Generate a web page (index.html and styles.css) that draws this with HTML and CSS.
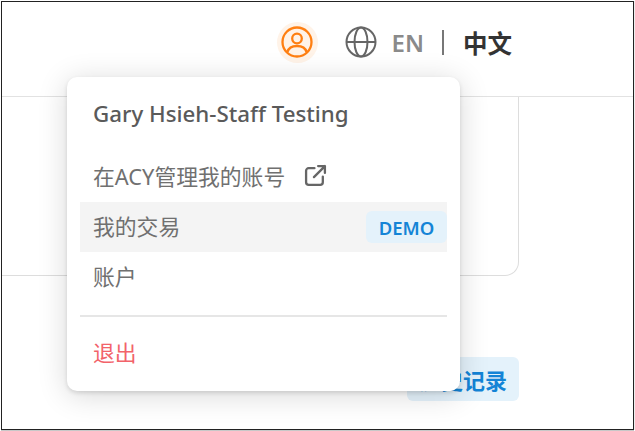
FILE: index.html
```html
<!DOCTYPE html>
<html lang="zh-CN">
<head>
    <meta charset="UTF-8" />
    <meta name="viewport" content="width=device-width, initial-scale=1" />
    <title>我的交易</title>
    <link rel="stylesheet" href="styles.css">
</head>
<body>
    <div class="frame">
        <header class="topbar">
            <span class="userIcon">
                <svg width="32" height="32" viewBox="0 0 32 32" fill="none" stroke="#ff7f11" stroke-width="2.300">
                    <circle cx="16" cy="16" r="14.500" />
                    <circle cx="16" cy="12.500" r="4.800" />
                    <path d="M6.500 26c1-4 4.500-6 9.500-6s8.500 2 9.500 6" />
                </svg>
            </span>
            <svg class="globe" width="32" height="32" viewBox="0 0 32 32" fill="none" stroke="#666" stroke-width="2">
                <circle cx="16" cy="16" r="14.500" />
                <ellipse cx="16" cy="16" rx="6.500" ry="14.500" />
                <path d="M1.500 16h29" />
            </svg>
            <span class="langEn">EN</span>
            <span class="langSep"></span>
            <span class="langZh">中文</span>
        </header>

        <div class="content">
            <div class="card"></div>
            <div class="recordRow">
                <a class="recordBtn">历史记录</a>
            </div>
        </div>

        <!-- user dropdown -->
        <div class="menu">
            <div class="menuName">Gary Hsieh-Staff Testing</div>
            <div class="menuItem">
                <span>在ACY管理我的账号</span>
                <svg class="extIcon" width="23" height="23" viewBox="0 0 22 22" fill="none" stroke="#666" stroke-width="2.200" stroke-linecap="round" stroke-linejoin="round">
                    <path d="M10 4H4.500A2.500 2.500 0 0 0 2 6.500v11A2.500 2.500 0 0 0 4.500 20h11a2.500 2.500 0 0 0 2.500-2.500V12" />
                    <path d="M9.500 12.500 20 2M13.500 2H20v6.500" />
                </svg>
            </div>
            <div class="menuItem active">
                <span>我的交易</span>
                <span class="demoTag">DEMO</span>
            </div>
            <div class="menuItem">账户</div>
            <div class="menuLine"></div>
            <div class="menuItem logout">退出</div>
        </div>
    </div>
</body>
</html>
```

FILE: styles.css
```css
* {
    box-sizing: border-box;
}
html, body {
    margin: 0;
    padding: 0;
    background: #fff;
}
body {
    width: 635px;
    height: 431px;
    padding: 1px 0 0 1px;
    overflow: hidden;
    font-family: "Noto Sans", "Noto Sans CJK SC", sans-serif;
}
.frame {
    position: relative;
    width: 633px;
    height: 429px;
    border: 1px solid #222;
    box-shadow: 0 1px 0 #c8c8c8, 1px 0 0 #eee;
    overflow: hidden;
    background: #fff;
}

/* top bar */
.topbar {
    height: 95px;
    border-bottom: 1px solid #e2e2e2;
    display: flex;
    align-items: center;
    justify-content: flex-end;
    padding: 0 121px 14px 0;
}
.userIcon {
    width: 41px;
    height: 41px;
    border-radius: 50%;
    background: #fff3e8;
    display: flex;
    align-items: center;
    justify-content: center;
    margin-right: 27px;
}
.globe {
    margin-right: 15px;
}
.langEn {
    font-size: 24px;
    font-weight: 600;
    color: #8a8a8a;
}
.langSep {
    width: 2px;
    height: 25px;
    background: #777;
    margin: 0 19px 0 18px;
}
.langZh {
    font-size: 24.500px;
    font-weight: 700;
    color: #333;
}

/* page behind the menu */
.content {
    width: 517px;
}
.card {
    height: 179px;
    border: 1px solid #ddd;
    border-top: none;
    border-left: none;
    border-radius: 0 0 14px 0;
}
.recordRow {
    display: flex;
    justify-content: flex-end;
    margin-top: 81px;
}
.recordBtn {
    width: 112px;
    height: 44px;
    background: #e4f2fb;
    border-radius: 6px;
    color: #1484d6;
    font-size: 22px;
    font-weight: 700;
    display: flex;
    align-items: center;
    justify-content: center;
}

/* dropdown */
.menu {
    position: absolute;
    left: 65px;
    top: 75px;
    width: 393px;
    height: 314px;
    padding: 0 13px;
    background: #fff;
    border-radius: 10px;
    box-shadow: 0 4px 30px rgba(0, 0, 0, 0.16), 0 2px 4px rgba(0, 0, 0, 0.12);
}
.menuName {
    height: 75px;
    padding: 21px 13px 0;
    font-size: 22.300px;
    font-weight: 500;
    line-height: 32px;
    color: #5a5a5a;
}
.menuItem {
    height: 50px;
    padding: 0 13px 4px;
    display: flex;
    align-items: center;
    font-size: 21.800px;
    color: #707070;
}
.extIcon {
    margin-left: 19px;
}
.active {
    justify-content: space-between;
    background: #f4f4f4;
    padding: 0 0 0 13px;
}
.active span:first-child {
    margin-bottom: 4px;
}
.demoTag {
    width: 81px;
    height: 32px;
    border-radius: 6px;
    background: #e4f2fb;
    color: #1484d6;
    font-size: 18.500px;
    font-weight: 600;
    display: flex;
    align-items: center;
    justify-content: center;
}
.menuLine {
    height: 2px;
    margin-top: 13px;
    background: #e6e6e6;
}
.logout {
    margin-top: 13px;
    height: 46px;
    color: #f2636a;
}
```
